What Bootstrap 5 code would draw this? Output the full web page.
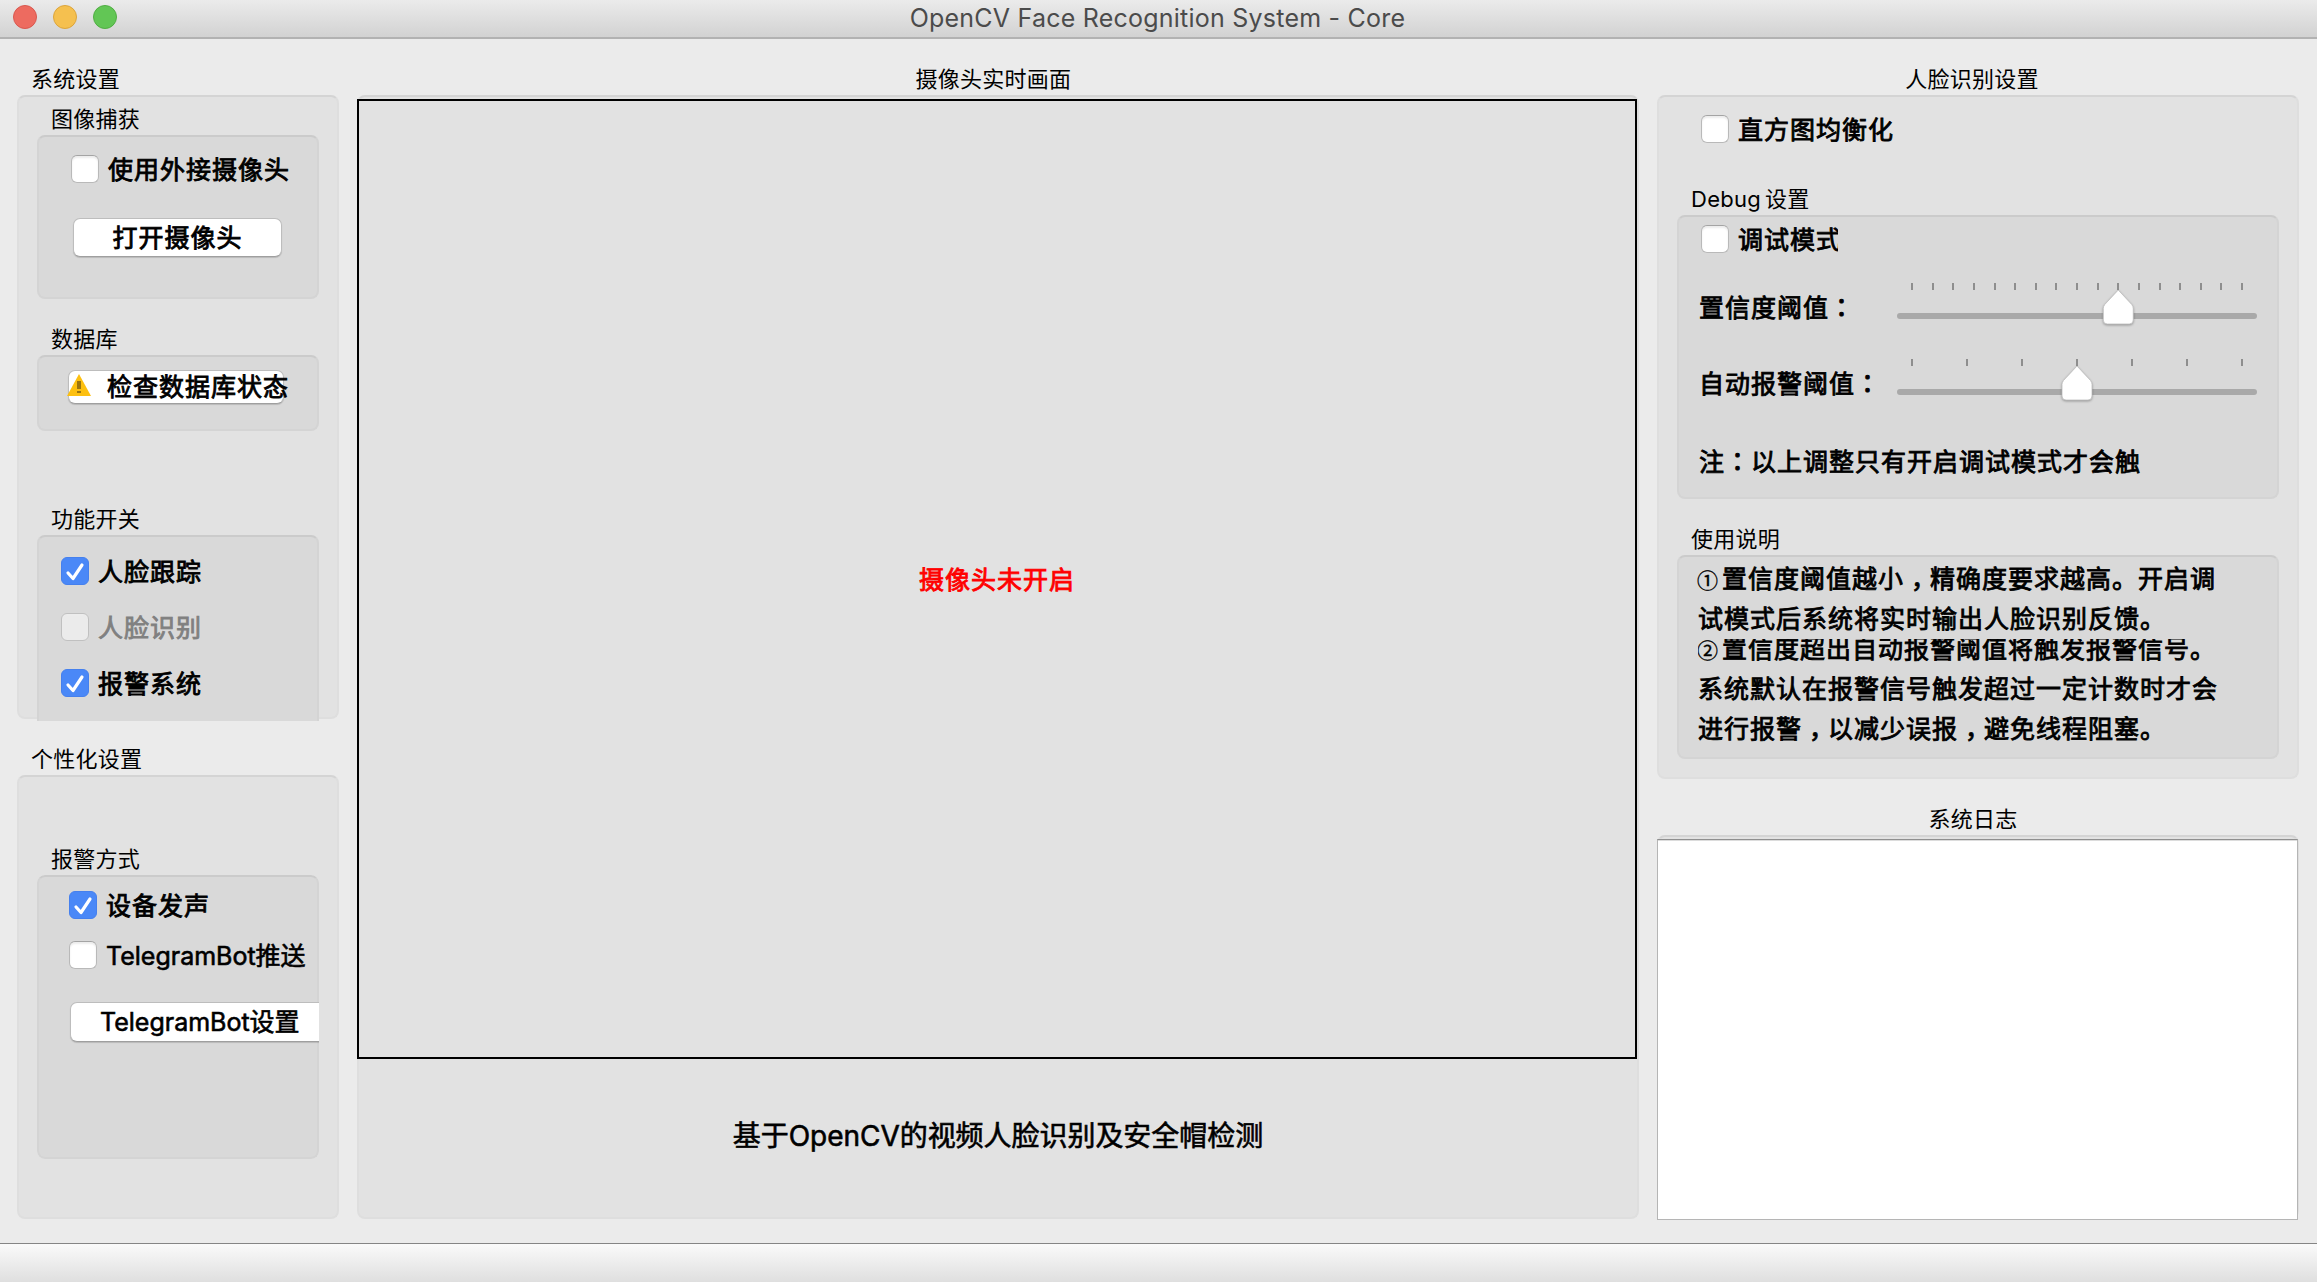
<!DOCTYPE html>
<html lang="zh-CN">
<head>
<meta charset="utf-8">
<title>OpenCV Face Recognition System - Core</title>
<link rel="stylesheet" href="https://cdn.jsdelivr.net/npm/bootstrap@5.3.0/dist/css/bootstrap.min.css">
<style>
  body { width: 2317px; height: 1282px; overflow: hidden; background: #ebebeb; color: #000;
         font-family: Inter, "Noto Sans CJK SC", sans-serif; font-size: 25px; line-height: 40px; white-space: nowrap; }
  .titlebar { height: 39px; background: linear-gradient(#ebebeb, #d2d2d2); border-bottom: 2px solid #b2b2b2; padding-left: 13px; }
  .titlebar .caption-text { font-size: 25px; color: #4b4b4b; line-height: 36px; letter-spacing: .23px; padding-right: 2px; }
  .light { width: 24px; height: 24px; border-radius: 50%; border: 1px solid; margin: 5px 16px 0 0; }
  .light-r { background: #ed6b60; border-color: #d9584f; }
  .light-y { background: #f5c04f; border-color: #dca53c; }
  .light-g { background: #62c655; border-color: #50ae43; }
  .main-area { height: 1204px; padding: 24px 18px 0 17px; gap: 18px; }
  .side-l { width: 322px; } .mid { width: 1282px; } .side-r { width: 642px; }
  .group-title { height: 32px; line-height: 33px; font-size: 22px; letter-spacing: .25px; padding-left: 14px; flex: none; }
  .pane { background: #e2e2e2; border: 2px solid #dedede; border-top-color: #d4d4d4; border-radius: 8px; flex: none; }
  .pane-in { background: #d9d9d9; border: 2px solid #d4d4d4; border-top-color: #cbcbcb; border-radius: 8px; flex: none; margin: 0 18px; }
  .pane .group-title { padding-left: 32px; }
  .strong { -webkit-text-stroke: .85px currentColor; letter-spacing: 1px; }
  .strong-l { -webkit-text-stroke: .6px currentColor; }
  .opt { height: 28px; line-height: 30px; gap: 9px; }
  .tick { width: 28px; height: 28px; flex: none; border-radius: 6px; border: 1px solid #b9b9b9; border-top-color: #a4a4a4; background: #fff; box-shadow: inset 0 2px 2px #ececec; }
  .tick.on { background: #4a88f7; border-color: #4580ee; box-shadow: none; }
  .tick.off { background: #ebebeb; border-color: #c0c0c0; }
  .tick svg { display: block; width: 26px; height: 26px; }
  .push { background: #fff; border: 1px solid #bdbdbd; border-bottom-color: #9f9f9f; border-radius: 7px; box-shadow: 0 1px 1px rgba(0,0,0,.15); color: #000; display: flex; align-items: center; font-size: 25px; padding: 0; flex: none; }
  .clipped { clip-path: inset(0 round 8px); }
  .clip-end { clip-path: inset(0 4px 0 0); }
  .viewport-frame { width: 1280px; height: 960px; border: 2px solid #000; margin: 2px 0 0 -2px; padding-top: 2px; color: #f00; background: #e2e2e2; }
  .headline { font-size: 28px; font-weight: 400; letter-spacing: -.04px; }
  .zh-colon { font-family: "Noto Sans CJK TC", sans-serif; }
  .zh-comma { display: inline-block; width: 26px; padding-left: 7px; letter-spacing: 0; line-height: 20px; font-feature-settings: "halt"; }
  .slider-row { height: 40px; line-height: 39px; }
  .slider-row svg { display: block; width: 360px; height: 44px; margin: -7px 20px 0 0; flex: none; overflow: visible; }
  .logbox { width: 641px; height: 381px; background: #fff; border: 1px solid #b5b5b5; border-top-color: #8f8f8f; box-shadow: inset 0 1px 0 #dcdcdc; margin: 2px 0 0 -2px; }
  .statusbar { height: 39px; border-top: 1px solid #858585; background: linear-gradient(#fafafa, #dfdfdf); }
  .circled { display: inline-block; width: 25px; font-family: "Noto Sans CJK SC", sans-serif; font-size: 21px; line-height: 20px; margin-left: -1px; -webkit-text-stroke: .35px #000; }
  .clip-top { clip-path: inset(10px 0 0 0); }
</style>
</head>
<body class="d-flex flex-column">
<header class="titlebar d-flex position-relative flex-shrink-0">
  <span class="light light-r"></span><span class="light light-y"></span><span class="light light-g"></span>
  <span class="caption-text position-absolute top-0 start-0 w-100 text-center">OpenCV Face Recognition System - Core</span>
</header>

<main class="main-area d-flex flex-shrink-0">
  <section class="side-l d-flex flex-column">
    <div class="group-title">系统设置</div>
    <div class="pane d-flex flex-column" style="height:624px">
      <div class="group-title" style="margin-top:6px">图像捕获</div>
      <div class="pane-in" style="height:164px;padding:18px 0 0 32px">
        <label class="opt d-flex strong"><span class="tick"></span>使用外接摄像头</label>
        <button class="push strong justify-content-center" style="width:209px;height:39px;margin:35px 0 0 2px">打开摄像头</button>
      </div>
      <div class="group-title" style="margin-top:24px">数据库</div>
      <div class="pane-in" style="height:76px;padding:13px 0 0 29px">
        <button class="push strong" style="width:216px;height:34px">
          <svg width="24" height="22" viewBox="0 0 24 22" class="flex-shrink-0" style="margin:-4px 16px 0 -2px"><path d="M12 0 L24 22 H0 Z" fill="#fdc010"/><path d="M10 7h4v8h-4zM10 17h4v2h-4z" fill="#9a7410"/></svg>检查数据库状态
        </button>
      </div>
      <div class="group-title" style="margin-top:72px">功能开关</div>
      <div class="pane-in d-flex flex-column border-bottom-0 rounded-bottom-0" style="height:186px;padding:20px 0 0 22px;gap:28px">
        <label class="opt d-flex strong"><span class="tick on"><svg viewBox="0 0 26 26"><path d="M6 15l5 5.500L20 7" fill="none" stroke="#fff" stroke-width="3.200" stroke-linecap="round" stroke-linejoin="round"/></svg></span>人脸跟踪</label>
        <label class="opt d-flex strong" style="color:#808080"><span class="tick off"></span>人脸识别</label>
        <label class="opt d-flex strong"><span class="tick on"><svg viewBox="0 0 26 26"><path d="M6 15l5 5.500L20 7" fill="none" stroke="#fff" stroke-width="3.200" stroke-linecap="round" stroke-linejoin="round"/></svg></span>报警系统</label>
      </div>
    </div>
    <div class="group-title" style="margin-top:24px">个性化设置</div>
    <div class="pane d-flex flex-column" style="height:444px">
      <div class="group-title" style="margin-top:66px">报警方式</div>
      <div class="pane-in clipped" style="height:284px;padding:14px 0 0 30px">
        <label class="opt d-flex strong"><span class="tick on"><svg viewBox="0 0 26 26"><path d="M6 15l5 5.500L20 7" fill="none" stroke="#fff" stroke-width="3.200" stroke-linecap="round" stroke-linejoin="round"/></svg></span>设备发声</label>
        <label class="opt d-flex strong-l" style="margin-top:22px"><span class="tick"></span>TelegramBot推送</label>
        <button class="push strong-l" style="width:262px;height:40px;margin:33px 0 0 1px;padding-left:29px">TelegramBot设置</button>
      </div>
    </div>
  </section>

  <section class="mid d-flex flex-column">
    <div class="group-title text-center p-0" style="margin-right:9px">摄像头实时画面</div>
    <div class="pane d-flex flex-column align-items-start" style="height:1124px">
      <div class="viewport-frame d-flex align-items-center justify-content-center flex-shrink-0 strong">摄像头未开启</div>
      <div class="headline strong-l w-100 text-center" style="margin-top:57px">基于OpenCV的视频人脸识别及安全帽检测</div>
    </div>
  </section>

  <section class="side-r d-flex flex-column">
    <div class="group-title text-center p-0" style="margin-right:12px">人脸识别设置</div>
    <div class="pane d-flex flex-column" style="height:684px">
      <label class="opt d-flex strong" style="margin:18px 0 0 42px">
        <span class="tick"></span>直方图均衡化</label>
      <div class="group-title" style="margin-top:40px"><span class="me-1">Debug</span>设置</div>
      <div class="pane-in" style="height:284px;padding:8px 0 0 20px">
        <label class="opt d-flex strong" style="margin-left:2px"><span class="tick"></span><span class="clip-end">调试模式</span></label>
        <div class="slider-row d-flex justify-content-between strong" style="margin-top:34px">
          <span>置信度阈值<span class="zh-colon" lang="zh-TW">：</span></span>
          <svg id="confidence" viewBox="0 0 360 44"></svg>
        </div>
        <div class="slider-row d-flex justify-content-between strong" style="margin-top:36px">
          <span>自动报警阈值<span class="zh-colon" lang="zh-TW">：</span></span>
          <svg id="alarm" viewBox="0 0 360 44"></svg>
        </div>
        <div class="strong" style="margin-top:37px">注<span class="zh-colon" lang="zh-TW">：</span>以上调整只有开启调试模式才会触</div>
      </div>
      <div class="group-title" style="margin-top:24px">使用说明</div>
      <div class="pane-in strong" style="height:204px;padding:2px 0 0 19px">
        <div><span class="circled">①</span>置信度阈值越小<span class="zh-comma">，</span>精确度要求越高。开启调</div>
        <div>试模式后系统将实时输出人脸识别反馈。</div>
        <div class="clip-top" style="margin-top:-10px"><span class="circled">②</span>置信度超出自动报警阈值将触发报警信号。</div>
        <div>系统默认在报警信号触发超过一定计数时才会</div>
        <div>进行报警<span class="zh-comma">，</span>以减少误报<span class="zh-comma">，</span>避免线程阻塞。</div>
      </div>
    </div>
    <div class="group-title text-center p-0" style="margin:24px 10px 0 0">系统日志</div>
    <div class="pane" style="height:384px">
      <div class="logbox"></div>
    </div>
  </section>
</main>
<footer class="statusbar flex-shrink-0"></footer>

<script src="https://cdn.jsdelivr.net/npm/bootstrap@5.3.0/dist/js/bootstrap.bundle.min.js"></script>
<script>
  // Draws tick marks, the groove and the pointed handle of a slider.
  function slider(id, ticks, at) {
    let s = '<rect x="0" y="33" width="360" height="6" rx="3" fill="#a9a9a9"/>';
    for (let i = 0; i < ticks; i++) {
      s += `<rect x="${Math.round(14 + i * 330 / (ticks - 1))}" y="3" width="2" height="7" fill="#8e8e8e"/>`;
    }
    const x = 15 + at * 330 / (ticks - 1);
    s += `<path d="M${x} 10 L${x + 13.5} 24.5 Q${x + 15} 26.500 ${x + 15} 28.500 V40 Q${x + 15} 44 ${x + 11} 44 H${x - 11} Q${x - 15} 44 ${x - 15} 40 V28.500 Q${x - 15} 26.500 ${x - 13.5} 24.5 Z" fill="#fff" stroke="#bdbdbd" stroke-width=".8" style="filter:drop-shadow(0 1px 1px rgba(0,0,0,.3))"/>`;
    document.getElementById(id).innerHTML = s;
  }
  slider('confidence', 17, 10);
  slider('alarm', 7, 3);
</script>
</body>
</html>
